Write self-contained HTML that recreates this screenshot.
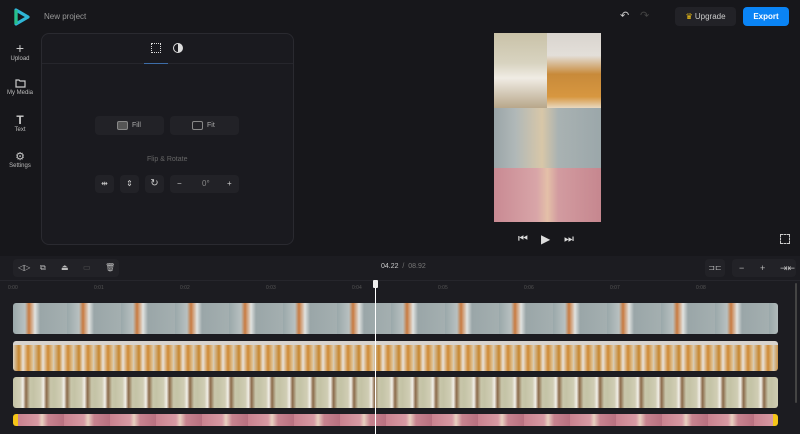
<!DOCTYPE html><html><head><style>
body{margin:0;width:800px;height:434px;background:#17171b;font-family:"Liberation Sans",sans-serif;color:#aaa;position:relative;overflow:hidden}
.a{position:absolute}
.side{font-size:6px;color:#bbb;text-align:center;width:40px;left:0}
.btn{position:absolute;background:#222227;border-radius:4px}
.t{position:absolute;left:13px;width:765px;border-radius:3px}
</style></head><body>
<svg class="a" style="left:13px;top:8px" width="18" height="18"><path d="M3 2 L15 9 L3 16 Z" fill="none" stroke="#2fb6d6" stroke-width="3.2" stroke-linejoin="round"/><path d="M3 2 L3 16" stroke="#27c08a" stroke-width="3.2"/></svg>
<div class="a" style="left:44px;top:12px;font-size:8px;color:#999">New project</div>
<div class="a side" style="top:40px"><div style="font-size:14px;color:#ccc">+</div>Upload</div>
<div class="a side" style="top:78px"><svg width="11" height="10"><path d="M1 2h3l1 1h5v6H1z" fill="none" stroke="#ccc" stroke-width="1.2"/></svg><br>My Media</div>
<div class="a side" style="top:113px"><div style="font-size:12px;color:#ccc;font-weight:bold">T</div>Text</div>
<div class="a side" style="top:150px"><div style="font-size:11px;color:#ccc">⚙</div>Settings</div>
<div class="a" style="left:41px;top:33px;width:251px;height:210px;border:1px solid #2a2a30;border-radius:8px;background:#1a1a1f"></div>
<div class="a" style="left:42px;top:63px;width:251px;height:1px;background:#26262c"></div>
<div class="a" style="left:144px;top:63px;width:24px;height:1px;background:#3d6da8"></div>
<div class="a" style="left:151px;top:43px;width:8px;height:8px;border:1px dotted #ddd"></div>
<div class="a" style="left:173px;top:43px;width:8px;height:8px;border:1px solid #ddd;border-radius:50%;background:linear-gradient(90deg,transparent 50%,#ddd 50%)"></div>
<div class="btn" style="left:95px;top:116px;width:69px;height:19px"><span class="a" style="left:22px;top:5px;width:9px;height:7px;border:1px solid #888;border-radius:2px;background:#555"></span><span class="a" style="left:37px;top:5px;font-size:7px;line-height:9px;color:#aaa">Fill</span></div>
<div class="btn" style="left:170px;top:116px;width:69px;height:19px"><span class="a" style="left:22px;top:5px;width:9px;height:7px;border:1px solid #888;border-radius:2px"></span><span class="a" style="left:37px;top:5px;font-size:7px;line-height:9px;color:#aaa">Fit</span></div>
<div class="a" style="left:147px;top:156px;font-size:7px;color:#666">Flip &amp; Rotate</div>
<div class="btn" style="left:95px;top:175px;width:19px;height:18px;font-size:8px;text-align:center;line-height:18px;color:#ccc">⇹</div>
<div class="btn" style="left:120px;top:175px;width:19px;height:18px;font-size:8px;text-align:center;line-height:18px;color:#ccc">⇕</div>
<div class="btn" style="left:145px;top:175px;width:19px;height:18px;font-size:10px;text-align:center;line-height:18px;color:#ccc">↻</div>
<div class="btn" style="left:170px;top:175px;width:69px;height:18px;font-size:8px;line-height:18px;color:#ccc"><span class="a" style="left:7px">−</span><span class="a" style="left:32px;color:#888">0°</span><span class="a" style="left:57px">+</span></div>
<div class="a" style="left:620px;top:9px;font-size:11px;color:#ccc">↶</div>
<div class="a" style="left:640px;top:9px;font-size:11px;color:#444">↷</div>
<div class="btn" style="left:675px;top:7px;width:61px;height:19px;font-size:8px;line-height:19px;color:#ccc;text-align:center"><span style="color:#f5c518">♛</span> Upgrade</div>
<div class="a" style="left:743px;top:7px;width:46px;height:19px;background:#0a84f5;border-radius:4px;color:#fff;font-size:8px;font-weight:bold;line-height:19px;text-align:center">Export</div>
<div class="a" style="left:494px;top:33px;width:53px;height:75px;background:linear-gradient(#c9c2a8,#d8d3c0 40%,#f0ece4 60%,#b8a78a)"></div>
<div class="a" style="left:547px;top:33px;width:54px;height:75px;background:linear-gradient(#d9d4ce,#e3dfd9 30%,#c88a3a 55%,#d79740 85%,#e8d8c0)"></div>
<div class="a" style="left:494px;top:108px;width:107px;height:60px;background:linear-gradient(90deg,#9aa5a8,#b0b8b8 20%,#d8c7a8 45%,#a9b2b2 60%,#9ba7aa)"></div>
<div class="a" style="left:494px;top:168px;width:107px;height:54px;background:linear-gradient(90deg,#c98a93,#d8a5a8 40%,#e4c0a8 50%,#d29ba0 60%,#c6878f)"></div>
<div class="a" style="left:518px;top:233px;font-size:11px;color:#ddd">⏮</div>
<div class="a" style="left:541px;top:232px;font-size:12px;color:#ddd">▶</div>
<div class="a" style="left:564px;top:233px;font-size:11px;color:#ddd">⏭</div>
<div class="a" style="left:780px;top:234px;width:8px;height:8px;border:1px dashed #ccc"></div>
<div class="a" style="left:0;top:256px;width:800px;height:178px;background:#1c1c21"></div>
<div class="a" style="left:0;top:280px;width:800px;height:1px;background:#26262c"></div>
<div class="btn" style="left:13px;top:259px;width:106px;height:18px;font-size:8px;color:#bbb;line-height:18px"><span class="a" style="left:5px">◁▷</span><span class="a" style="left:27px">⧉</span><span class="a" style="left:48px">⏏</span><span class="a" style="left:70px;color:#555">▭</span><span class="a" style="left:92px">🗑</span></div>
<div class="a" style="left:381px;top:263px;font-size:7px;color:#ccc">04.22 <span style="color:#777">&nbsp;/&nbsp; 08.92</span></div>
<div class="btn" style="left:705px;top:259px;width:20px;height:18px;font-size:8px;text-align:center;line-height:18px;color:#bbb">⊐⊏</div>
<div class="btn" style="left:732px;top:259px;width:64px;height:18px;font-size:9px;color:#bbb;line-height:18px"><span class="a" style="left:7px">−</span><span class="a" style="left:28px">+</span><span class="a" style="left:48px">⇥⇤</span></div>
<div class="a" style="top:285px;left:8px;width:720px;font-size:5px;color:#555"><span class="a" style="left:0">0:00</span><span class="a" style="left:86px">0:01</span><span class="a" style="left:172px">0:02</span><span class="a" style="left:258px">0:03</span><span class="a" style="left:344px">0:04</span><span class="a" style="left:430px">0:05</span><span class="a" style="left:516px">0:06</span><span class="a" style="left:602px">0:07</span><span class="a" style="left:688px">0:08</span></div>
<div class="t" style="top:303px;height:31px;background:repeating-linear-gradient(90deg,#9aa8aa 0,#b8c0c0 12px,#c87a40 16px,#e0e2e0 22px,#9aa6a8 27px,#a4afb0 54px)"></div>
<div class="t" style="top:341px;height:30px;background:repeating-linear-gradient(90deg,#d8d0c0 0,#c7862e 6px,#e8e2d8 10px,#cf8a34 15px,#e0c8a0 20px);border-top:4px solid #d8d4ce;box-sizing:border-box"></div>
<div class="t" style="top:377px;height:31px;background:repeating-linear-gradient(90deg,#c4c3a6 0,#d0cdb4 7px,#f2efe8 10px,#8a6a4a 13px,#c8c6aa 17px,#c4c3a6 20.5px)"></div>
<div class="t" style="top:414px;height:12px;background:repeating-linear-gradient(90deg,#c9828f 0,#d79aa4 20px,#e8d0c0 24px,#c7838f 30px,#b87080 46px);border-left:5px solid #f5c518;border-right:5px solid #f5c518;box-sizing:border-box"></div>
<div class="a" style="left:375px;top:283px;width:1px;height:151px;background:#fff"></div>
<div class="a" style="left:373px;top:280px;width:5px;height:8px;background:#eee;border-radius:1px"></div>
<div class="a" style="left:795px;top:283px;width:2px;height:120px;background:#444;border-radius:1px"></div>
</body></html>
